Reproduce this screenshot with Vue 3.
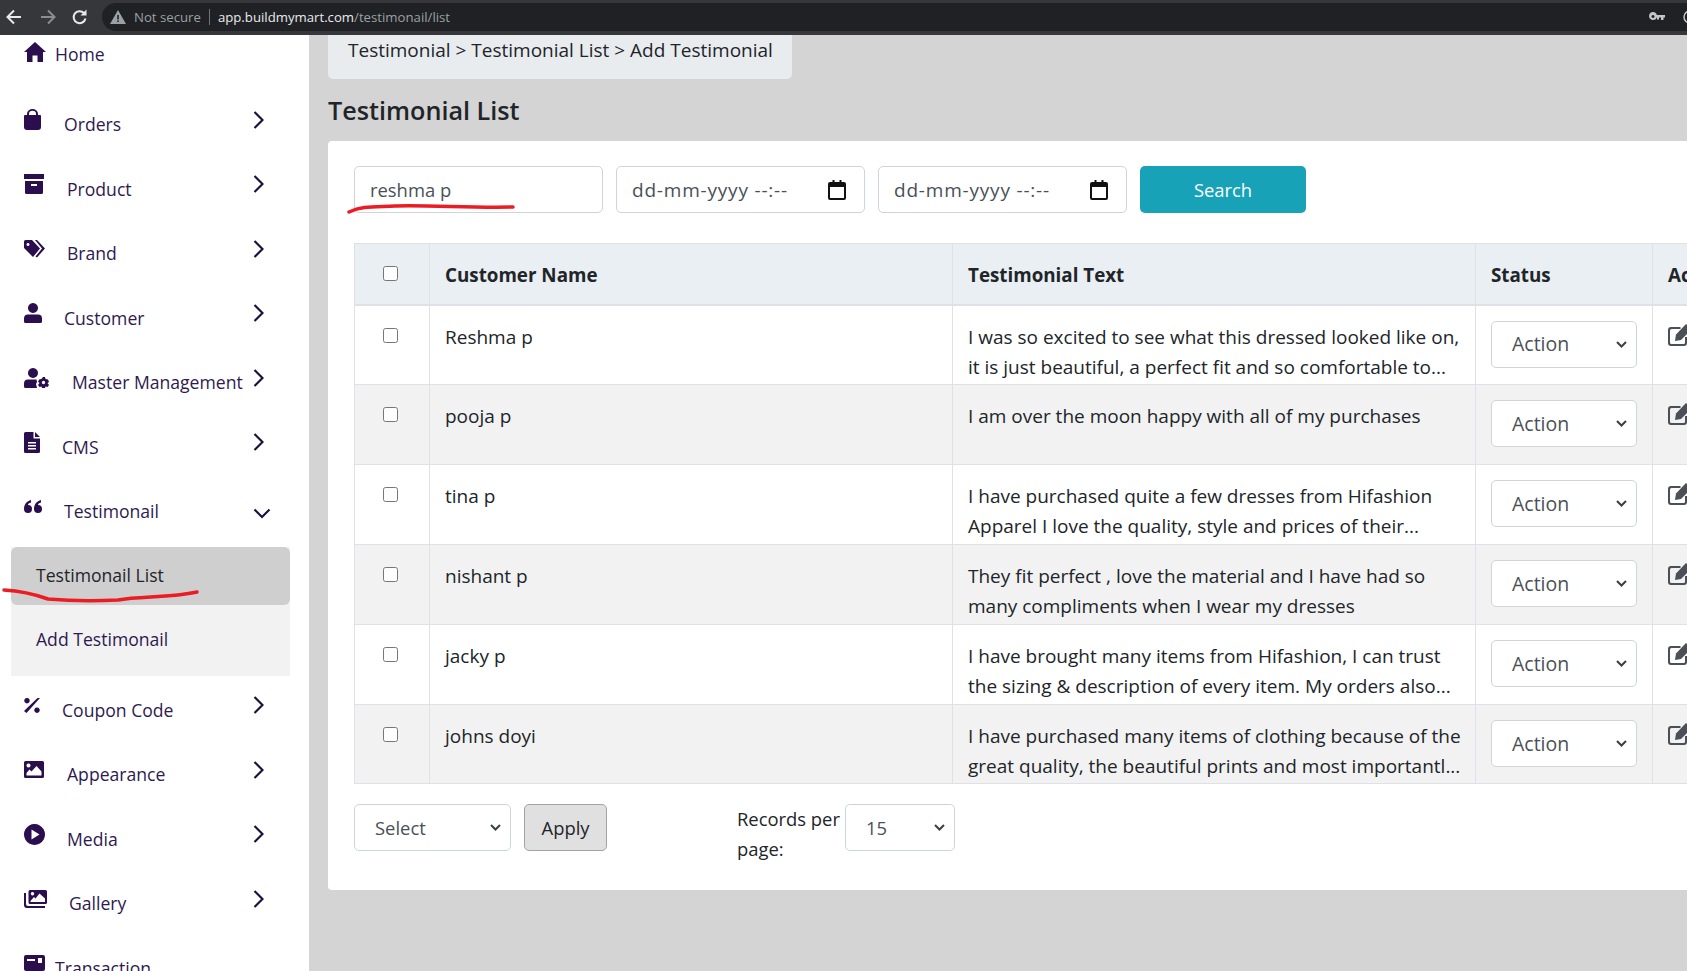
<script setup>
const icons = {
  home: { w: 22, h: 20, d: 'M11 0 L22 10 H19 V20 H13.5 V13.5 H8.5 V20 H3 V10 H0 Z' },
  bag: { w: 17, h: 21, d: 'M3 6 V5 A5.5 5 0 0 1 14 5 V6 H16 A1 1 0 0 1 17 7 V18 A3 3 0 0 1 14 21 H3 A3 3 0 0 1 0 18 V7 A1 1 0 0 1 1 6 Z M5 6 H12 V5 A3.5 3.2 0 0 0 5 5 Z' },
  box: { w: 20, h: 20, d: 'M0 0 H20 V5 H0 Z M1 7 H19 V18.5 A1.5 1.5 0 0 1 17.500 20 H2.500 A1.500 1.500 0 0 1 1 18.500 Z M7 10 V12 H13 V10 Z' },
  tags: { w: 21, h: 18, d: 'M0 1.500 A1.500 1.500 0 0 1 1.500 0 H8 L16 8.500 L9 17 L0 8 Z M4 3 A1.500 1.500 0 1 0 4.010 3 Z M11 0 L13 0 L21 8.500 L13 17.500 L11.500 16.500 L18 8.500 Z' },
  user: { w: 18, h: 20, d: 'M9 0 A5 5 0 1 1 8.990 0 Z M4 11.500 H14 A4 4 0 0 1 18 15.500 V18.500 A1.500 1.500 0 0 1 16.500 20 H1.500 A1.500 1.500 0 0 1 0 18.500 V15.500 A4 4 0 0 1 4 11.500 Z' },
  usercog: { w: 25, h: 20, d: 'M9 0 A5 5 0 1 1 8.990 0 Z M4 11.500 H12.500 L13 14 L12 16 L13 20 H1.500 A1.500 1.500 0 0 1 0 18.500 V15.500 A4 4 0 0 1 4 11.500 Z M19 9 L21 9 L21.500 11 L24 11.500 L25 14 L23.500 15 L25 17 L23.500 19 L21.500 18.500 L21 20 H18 L17.500 18.500 L15.500 19 L14 17 L15.500 15 L14 13.500 L15.500 11.200 L17.500 11 Z M19.500 12.800 A1.700 1.700 0 1 0 19.510 12.800 Z' },
  file: { w: 16, h: 21, d: 'M1.500 0 H9.500 V6.500 H16 V19.500 A1.500 1.500 0 0 1 14.500 21 H1.500 A1.500 1.500 0 0 1 0 19.500 V1.500 A1.500 1.500 0 0 1 1.500 0 Z M4 10 V11.500 H12 V10 Z M4 13 V14.500 H12 V13 Z M4 16 V17.500 H12 V16 Z M11 0 L16 5 H11 Z' },
  quote: { w: 18, h: 13, d: 'M4 5 A4 4 0 1 1 0 9 C0 4 3 1 7 0 V2.500 C5 3 4 4 4 5 Z M14 5 A4 4 0 1 1 10 9 C10 4 13 1 17 0 V2.500 C15 3 14 4 14 5 Z' },
  percent: { w: 16, h: 15, d: 'M13.500 0 L16 0 L2.500 15 L0 13 Z M3 0 A2.700 2.700 0 1 1 2.990 0 Z M13 9.500 A2.700 2.700 0 1 1 12.990 9.500 Z' },
  image: { w: 20, h: 17, d: 'M1.500 0 H18.500 A1.500 1.500 0 0 1 20 1.500 V15.500 A1.500 1.500 0 0 1 18.500 17 H1.500 A1.500 1.500 0 0 1 0 15.500 V1.500 A1.500 1.500 0 0 1 1.500 0 Z M4.500 2.500 A2 2 0 1 0 4.510 2.500 Z M12.500 5 L7.500 10.500 L5.500 8.500 L2.500 12 V14.500 H17.500 V10.500 Z' },
  play: { w: 21, h: 21, d: 'M10.500 0 A10.500 10.500 0 1 1 10.490 0 Z M7.500 5.500 V15.500 L15.500 10.500 Z' },
  images: { w: 23, h: 18, d: 'M6 0 H21.500 A1.500 1.500 0 0 1 23 1.500 V12.500 A1.500 1.500 0 0 1 21.500 14 H6 A1.500 1.500 0 0 1 4.500 12.500 V1.500 A1.500 1.500 0 0 1 6 0 Z M8.500 2 A1.700 1.700 0 1 0 8.510 2 Z M15.500 3.500 L11.500 8.500 L10 7 L6.500 11 V12 H21 V8.500 Z M0 3 H2 V14 A2 2 0 0 0 4 16 H21 V18 H3 A3 3 0 0 1 0 15 Z' },
  card: { w: 21, h: 16, d: 'M2 0 H19 A2 2 0 0 1 21 2 V14 A2 2 0 0 1 19 16 H2 A2 2 0 0 1 0 14 V2 A2 2 0 0 1 2 0 Z M3 4 V6 H11 V4 Z M14 3 V8 H18 V3 Z' },
}

const menu = [
  { label: 'Orders', icon: 'bag', text: 64 },
  { label: 'Product', icon: 'box', text: 67 },
  { label: 'Brand', icon: 'tags', text: 67 },
  { label: 'Customer', icon: 'user', text: 64 },
  { label: 'Master Management', icon: 'usercog', text: 72 },
  { label: 'CMS', icon: 'file', text: 62 },
  { label: 'Testimonail', icon: 'quote', text: 64, open: true },
]
const menuAfter = [
  { label: 'Coupon Code', icon: 'percent', text: 62 },
  { label: 'Appearance', icon: 'image', text: 67 },
  { label: 'Media', icon: 'play', text: 67 },
  { label: 'Gallery', icon: 'images', text: 69 },
]

const rows = [
  { name: 'Reshma p', text: ['I was so excited to see what this dressed looked like on,', 'it is just beautiful, a perfect fit and so comfortable to...'] },
  { name: 'pooja p', text: ['I am over the moon happy with all of my purchases'] },
  { name: 'tina p', text: ['I have purchased quite a few dresses from Hifashion', 'Apparel I love the quality, style and prices of their...'] },
  { name: 'nishant p', text: ['They fit perfect , love the material and I have had so', 'many compliments when I wear my dresses'] },
  { name: 'jacky p', text: ['I have brought many items from Hifashion, I can trust', 'the sizing & description of every item. My orders also...'] },
  { name: 'johns doyi', text: ['I have purchased many items of clothing because of the', 'great quality, the beautiful prints and most importantl...'] },
]
</script>

<template>
  <div class="page">
    <header class="chrome">
      <svg class="nav" width="20" height="20" viewBox="0 0 20 20"><path d="M17 10H4M10 3.500 3.500 10l6.500 6.500" fill="none" stroke="#e8eaed" stroke-width="2" /></svg>
      <svg class="nav dim" width="20" height="20" viewBox="0 0 20 20"><path d="M3 10h13M10 3.500l6.500 6.500-6.500 6.500" fill="none" stroke="#8b8d91" stroke-width="2" /></svg>
      <svg class="nav" width="20" height="20" viewBox="0 0 20 20"><path d="M15.500 11.500A6 6 0 1 1 14 6" fill="none" stroke="#e8eaed" stroke-width="2" /><path d="M16.500 2.500v6h-6z" fill="#e8eaed" /></svg>
      <div class="omnibox">
        <svg class="warn" width="16" height="14" viewBox="0 0 16 14"><path d="M8 0 16 14H0ZM7.200 5v4.500h1.600V5Zm0 5.500V12h1.600v-1.500Z" fill="#9aa0a6" fill-rule="evenodd" /></svg>
        <span class="insecure">Not secure</span>
        <span class="sep"></span>
        <span class="url"><b>app.buildmymart.com</b>/testimonail/list</span>
        <svg class="key" width="16" height="10" viewBox="0 0 16 10"><path d="M4 0a4 4 0 0 1 3.800 3H16v2.500h-1.500V8H12V5.500H10V7.500H8V5.500H7.800A4 4 0 1 1 4 0Zm0 3a1.500 1.500 0 1 0 .010 0Z" fill="#c4c7c5" fill-rule="evenodd" /></svg>
        <svg class="zoomi" width="14" height="14" viewBox="0 0 14 14"><circle cx="8" cy="7" r="6" fill="none" stroke="#c4c7c5" stroke-width="1.500" /><path d="M5 7h6" stroke="#c4c7c5" stroke-width="1.500" /></svg>
      </div>
    </header>

    <div class="body">
      <aside class="sidebar">
        <div class="home">
          <svg class="mi" :width="icons.home.w" :height="icons.home.h" :viewBox="`0 0 ${icons.home.w} ${icons.home.h}`"><path :d="icons.home.d" /></svg>
          <span class="home-label">Home</span>
        </div>

        <div v-for="m in menu" :key="m.label" class="item">
          <span class="icon-slot"><svg class="mi" :width="icons[m.icon].w" :height="icons[m.icon].h" :viewBox="`0 0 ${icons[m.icon].w} ${icons[m.icon].h}`"><path :d="icons[m.icon].d" fill-rule="evenodd" /></svg></span>
          <span class="item-label" :style="{ left: m.text + 'px' }">{{ m.label }}</span>
          <svg v-if="m.open" class="chev-down" width="18" height="11" viewBox="0 0 18 11"><path d="M1.500 1.500 9 9l7.500-7.500" fill="none" stroke="#17123f" stroke-width="2.200" /></svg>
          <svg v-else class="chev" width="11" height="18" viewBox="0 0 11 18"><path d="M1.500 1 9.500 9l-8 8" fill="none" stroke="#17123f" stroke-width="2.200" /></svg>
        </div>

        <div class="sub">
          <div class="sub-active">Testimonail List</div>
          <div class="sub-link">Add Testimonail</div>
        </div>

        <div v-for="m in menuAfter" :key="m.label" class="item">
          <span class="icon-slot"><svg class="mi" :width="icons[m.icon].w" :height="icons[m.icon].h" :viewBox="`0 0 ${icons[m.icon].w} ${icons[m.icon].h}`"><path :d="icons[m.icon].d" fill-rule="evenodd" /></svg></span>
          <span class="item-label" :style="{ left: m.text + 'px' }">{{ m.label }}</span>
          <svg class="chev" width="11" height="18" viewBox="0 0 11 18"><path d="M1.500 1 9.500 9l-8 8" fill="none" stroke="#17123f" stroke-width="2.200" /></svg>
        </div>

        <div class="item">
          <span class="icon-slot"><svg class="mi" width="21" height="16" viewBox="0 0 21 16"><path :d="icons.card.d" fill-rule="evenodd" /></svg></span>
          <span class="item-label trans">Transaction</span>
        </div>
      </aside>

      <main class="main">
        <nav class="crumb">Testimonial &gt; Testimonial List &gt; Add Testimonial</nav>
        <h1 class="title">Testimonial List</h1>

        <section class="card">
          <form class="filters" @submit.prevent>
            <input class="field" value="reshma p" />
            <div class="field date">
              <span class="date-text">dd-mm-yyyy --:--</span>
              <svg width="18" height="20" viewBox="0 0 18 20"><path d="M2 2H4.500V0H6.500V2H11.500V0H13.500V2H16A2 2 0 0 1 18 4V18A2 2 0 0 1 16 20H2A2 2 0 0 1 0 18V4A2 2 0 0 1 2 2ZM2 7V18H16V7Z" fill="#111" fill-rule="evenodd" /></svg>
            </div>
            <div class="field date">
              <span class="date-text">dd-mm-yyyy --:--</span>
              <svg width="18" height="20" viewBox="0 0 18 20"><path d="M2 2H4.500V0H6.500V2H11.500V0H13.500V2H16A2 2 0 0 1 18 4V18A2 2 0 0 1 16 20H2A2 2 0 0 1 0 18V4A2 2 0 0 1 2 2ZM2 7V18H16V7Z" fill="#111" fill-rule="evenodd" /></svg>
            </div>
            <button class="search" type="button">Search</button>
          </form>

          <table class="grid">
            <colgroup>
              <col class="c1" />
              <col class="c2" />
              <col class="c3" />
              <col class="c4" />
              <col class="c5" />
            </colgroup>
            <thead>
              <tr>
                <th class="check"><input type="checkbox" /></th>
                <th>Customer Name</th>
                <th>Testimonial Text</th>
                <th>Status</th>
                <th>Action</th>
              </tr>
            </thead>
            <tbody>
              <tr v-for="r in rows" :key="r.name">
                <td class="check"><input type="checkbox" /></td>
                <td>{{ r.name }}</td>
                <td><div v-for="line in r.text" :key="line">{{ line }}</div></td>
                <td class="status">
                  <div class="select action"><span>Action</span><svg class="caret" width="11" height="7" viewBox="0 0 11 7"><path d="M1 1l4.500 4.500L10 1" fill="none" stroke="#3c4046" stroke-width="2" /></svg></div>
                </td>
                <td class="act">
                  <svg width="24" height="22" viewBox="0 0 24 22"><path d="M3 3H12.500V5H3.500A1.500 1.500 0 0 0 2 6.500V18.500A1.500 1.500 0 0 0 3.500 20H15.500A1.500 1.500 0 0 0 17 18.500V13H19V19A3 3 0 0 1 16 22H3A3 3 0 0 1 0 19V6A3 3 0 0 1 3 3Z" fill="#4a5056" /><path d="M18 0 23.500 5.500 13 16 7 17 8 10.500Z" fill="#4a5056" /></svg>
                </td>
              </tr>
            </tbody>
          </table>

          <div class="bottom">
            <div class="select bulk"><span>Select</span><svg class="caret" width="11" height="7" viewBox="0 0 11 7"><path d="M1 1l4.500 4.500L10 1" fill="none" stroke="#3c4046" stroke-width="2" /></svg></div>
            <button class="apply" type="button">Apply</button>
            <label class="records">Records per page:</label>
            <div class="select per"><span>15</span><svg class="caret" width="11" height="7" viewBox="0 0 11 7"><path d="M1 1l4.500 4.500L10 1" fill="none" stroke="#3c4046" stroke-width="2" /></svg></div>
          </div>
        </section>
      </main>
    </div>

    <svg class="ink" width="1687" height="971" viewBox="0 0 1687 971">
      <path d="M349 212C362 206 372 207 395 206C430 205 470 208 513 207" />
      <path d="M4 590C22 591 34 594 48 599C70 601 100 601 118 600C140 596 170 598 197 592" />
    </svg>
  </div>
</template>

<style>
html, body { margin: 0; padding: 0; background: #d4d4d4; overflow: hidden; }
</style>

<style scoped>
.page {
  position: relative;
  width: 1687px;
  height: 971px;
  overflow: hidden;
  display: flex;
  flex-direction: column;
  font-family: "Open Sans", "Noto Sans", sans-serif;
  font-size: 18.400px;
  color: #212529;
  background: #d4d4d4;
}
.chrome {
  flex: 0 0 35px;
  box-sizing: border-box;
  background: #36373b;
  display: flex;
  align-items: center;
  padding: 3px 0 4px 4px;
}
.nav { flex: none; margin-right: 14px; }
.nav.dim { margin-right: 12px; }
.omnibox {
  flex: 1;
  height: 28px;
  margin-left: -2px;
  background: #202124;
  border-radius: 14px 0 0 14px;
  display: flex;
  align-items: center;
  font-size: 13.200px;
}
.warn { margin: 0 8px 0 8px; }
.insecure { color: #9aa0a6; }
.sep { width: 1px; height: 16px; background: #70757a; margin: 0 8px; }
.url { color: #9aa0a6; }
.url b { color: #e8eaed; font-weight: 400; }
.key { margin-left: auto; margin-right: 17px; }
.zoomi { margin-right: -9px; }

.body { flex: 1; min-height: 0; display: flex; }

.sidebar {
  flex: 0 0 309px;
  background: #fff;
  overflow: hidden;
  color: #2e1a50;
  font-size: 17.600px;
}
.mi { display: block; fill: #2a0e4d; }
.home {
  height: 38px;
  margin-bottom: 19px;
  display: flex;
  align-items: center;
  padding-left: 24px;
}
.home .mi { margin-bottom: 4px; }
.home-label { margin-left: 9px; }
.item {
  position: relative;
  height: 64.500px;
  display: flex;
  align-items: center;
  padding: 0 45px 0 24px;
  box-sizing: border-box;
}
.icon-slot { display: block; margin-bottom: 9px; }
.item-label { position: absolute; top: 50%; transform: translateY(-52%); white-space: nowrap; }
.trans { left: 55px; }
.chev { margin-left: auto; margin-bottom: 9px; }
.chev-down { margin-left: auto; margin-right: -7px; margin-top: 4px; }
.sub { margin: 3px 19px 2px 11px; background: #f2f2f2; }
.sub-active {
  height: 58px;
  box-sizing: border-box;
  padding: 16px 25px 0;
  background: #d0cfd0;
  border-radius: 6px;
  color: #212529;
}
.sub-link {
  height: 71px;
  box-sizing: border-box;
  padding: 22px 25px 0;
  color: #2e1a50;
}

.main { flex: 1; min-width: 0; padding: 0 0 0 19px; }
.crumb {
  display: inline-block;
  width: 464px;
  height: 44px;
  box-sizing: border-box;
  padding: 2px 0 0 20px;
  background: #e9ecef;
  border-radius: 0 0 5px 5px;
  white-space: nowrap;
  font-size: 19px;
}
.title {
  margin: 13px 0 13px;
  font-size: 25.200px;
  line-height: 36px;
  font-weight: 600;
  color: #212529;
}
.card {
  width: 1500px;
  height: 749px;
  box-sizing: border-box;
  padding: 25px 26px;
  background: #fff;
  border-radius: 4px 0 0 4px;
}
.filters { display: flex; gap: 13px; }
.field {
  box-sizing: border-box;
  width: 249px;
  height: 47px;
  padding: 0 15px;
  border: 1px solid #ced4da;
  border-radius: 5px;
  background: #fff;
  font: inherit;
  color: #495057;
}
.date { display: flex; align-items: center; justify-content: space-between; padding-right: 18px; }
.date-text { font-size: 19px; letter-spacing: 0.800px; white-space: nowrap; }
.search {
  width: 166px;
  height: 47px;
  border: 0;
  border-radius: 5px;
  background: #17a2b8;
  color: #fff;
  font: inherit;
}
.grid {
  margin-top: 30px;
  width: 1498px;
  table-layout: fixed;
  border-collapse: collapse;
  line-height: 30px;
  font-size: 19px;
}
.c1 { width: 75px; }
.c2 { width: 523px; }
.c3 { width: 523px; }
.c4 { width: 177px; }
.c5 { width: 200px; }
.grid th, .grid td {
  border: 1px solid #dee2e6;
  padding: 16px 15px 0;
  vertical-align: top;
  text-align: left;
  box-sizing: border-box;
}
.grid th { height: 61px; background: #e9eff2; font-weight: 700; border-bottom-width: 2px; font-size: 18.800px; }
.grid td { height: 80px; white-space: nowrap; }
.grid tbody tr:nth-child(even) td { background: #f2f2f2; }
.grid tbody tr:last-child td { height: 79px; }
.grid .check { text-align: center; padding: 0 3px 0 0; vertical-align: top; }
.check input { width: 15px; height: 15px; margin: 22px 0 0; display: inline-block; }
.grid .status { padding-top: 15px; }
.grid .act { padding-top: 18px; }
.act svg { display: block; }
.select {
  box-sizing: border-box;
  height: 47px;
  padding: 0 9px 0 20px;
  border: 1px solid #ced4da;
  border-radius: 5px;
  background: #fff;
  color: #495057;
  display: flex;
  align-items: center;
  justify-content: space-between;
}
.caret { flex: none; }
.action { width: 146px; font-size: 19.500px; }
.bottom { display: flex; align-items: flex-start; margin-top: 20px; }
.bulk { width: 157px; }
.apply {
  width: 83px;
  height: 47px;
  margin-left: 13px;
  border: 1px solid #a3a3a3;
  border-radius: 5px;
  background: #e0e0e0;
  color: #212529;
  font: inherit;
}
.records { width: 108px; margin-left: 130px; line-height: 30px; }
.per { width: 110px; }

.ink { position: absolute; left: 0; top: 0; pointer-events: none; }
.ink path { fill: none; stroke: #ec1c24; stroke-width: 3.500; stroke-linecap: round; }
</style>
